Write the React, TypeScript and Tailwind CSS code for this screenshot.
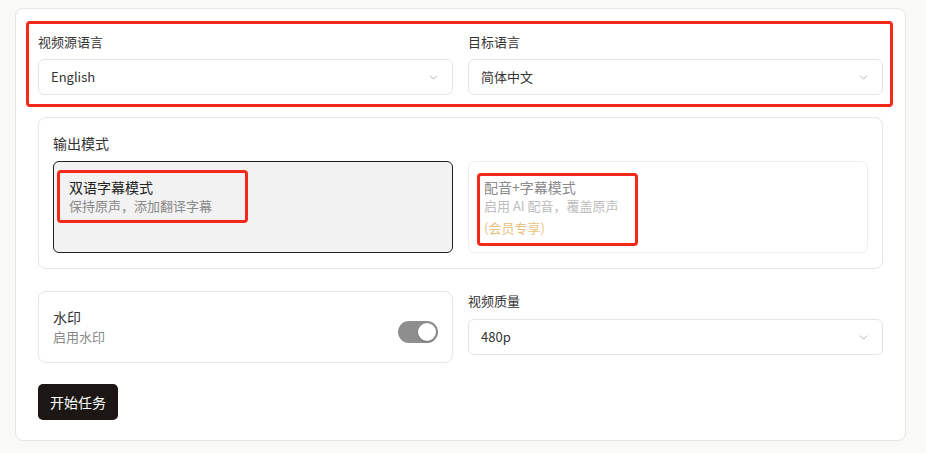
import React from "react";
import { ChevronDown } from "lucide-react";

const font = { fontFamily: '"Noto Sans CJK SC", "Noto Sans", sans-serif' };

function Select({ value }: { value: string }) {
  return (
    <div className="flex h-[36px] items-center justify-between rounded-[6px] border border-[#e5e5e5] bg-white pl-3 pr-3 text-[13px] text-[#333]">
      <span>{value}</span>
      <ChevronDown size={13} strokeWidth={1.5} color="#a0a0a0" />
    </div>
  );
}

function Field({ label, value }: { label: string; value: string }) {
  return (
    <div className="flex flex-col gap-[7px]">
      <div className="h-[20px] text-[13px] leading-[20px] text-[#333]">{label}</div>
      <Select value={value} />
    </div>
  );
}

export default function App() {
  return (
    <div className="min-h-[453px] w-full bg-[#f9f9f6] pl-[15px] pt-[8px]" style={font}>
      <div className="flex w-[891px] flex-col gap-[22px] rounded-[8px] border border-[#e6e6e3] bg-white px-[22px] pb-[20px] pt-[23px]">
        <div className="relative grid grid-cols-2 gap-[15px]">
          <Field label="视频源语言" value="English" />
          <Field label="目标语言" value="简体中文" />
          <div className="pointer-events-none absolute -bottom-[12px] -left-[12px] -right-[10px] -top-[11px] rounded-[4px] border-[3px] border-[#f5291b]" />
        </div>

        <div className="flex flex-col gap-[8px] rounded-[8px] border border-[#e6e6e6] px-[14px] pb-[15px] pt-[15px]">
          <div className="h-[20px] text-[14px] leading-[20px] text-[#333]">输出模式</div>
          <div className="grid grid-cols-2 gap-[15px]">
            <div className="relative rounded-[6px] border border-[#1f1f1f] bg-[#f2f2f2] px-[15px] pt-[15px]">
              <div className="text-[14px] leading-[20px] text-[#222]">双语字幕模式</div>
              <div className="text-[13px] leading-[18px] text-[#888]">保持原声，添加翻译字幕</div>
              <div className="pointer-events-none absolute left-[3px] top-[8px] h-[53px] w-[191px] rounded-[4px] border-[3px] border-[#f5291b]" />
            </div>
            <div className="relative rounded-[6px] border border-[#efefef] bg-white px-[15px] pb-[15px] pt-[15px]">
              <div className="text-[14px] leading-[20px] text-[#8a8a8a]">配音+字幕模式</div>
              <div className="text-[13px] leading-[18px] text-[#bdbdbd]">启用 AI 配音，覆盖原声</div>
              <div className="mt-[4px] text-[13px] leading-[18px] text-[#e8c27f]">(会员专享)</div>
              <div className="pointer-events-none absolute left-[8px] top-[11px] h-[73px] w-[161px] rounded-[4px] border-[3px] border-[#f5291b]" />
            </div>
          </div>
        </div>

        <div className="grid grid-cols-2 gap-[15px]">
          <div className="flex items-center justify-between rounded-[8px] border border-[#e6e6e6] px-[14px] py-[15px]">
            <div className="flex flex-col">
              <div className="text-[14px] leading-[20px] text-[#333]">水印</div>
              <div className="text-[13px] leading-[20px] text-[#888]">启用水印</div>
            </div>
            <div className="mt-[9px] flex h-[22px] w-[40px] items-center justify-end rounded-full bg-[#8e8e8e] px-[2px]">
              <div className="h-[18px] w-[18px] rounded-full bg-white shadow-[0_1px_2px_rgba(0,0,0,0.2)]" />
            </div>
          </div>
          <div className="flex flex-col gap-[8px]">
            <div className="h-[20px] text-[13px] leading-[20px] text-[#333]">视频质量</div>
            <Select value="480p" />
          </div>
        </div>

        <div className="-mt-[1px]">
          <button className="h-[36px] rounded-[5px] bg-[#1c1714] px-3 text-[14px] text-white">开始任务</button>
        </div>
      </div>
    </div>
  );
}
